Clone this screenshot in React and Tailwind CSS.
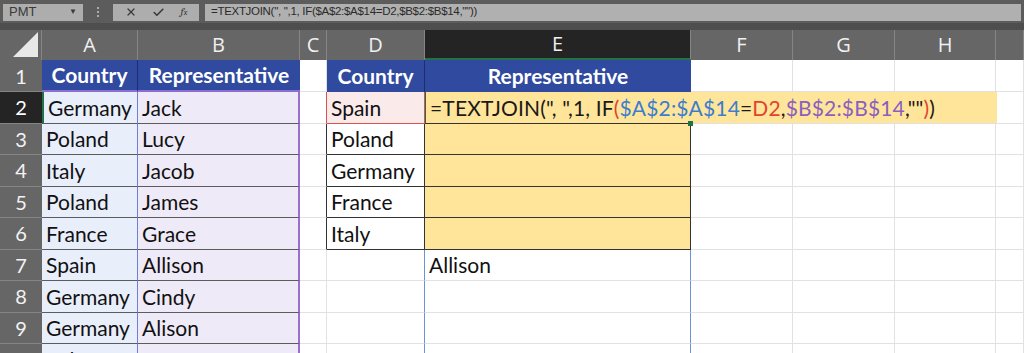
import { X, Check } from 'lucide-react'

const font = { fontFamily: 'Lato, "Noto Sans", sans-serif' }

const widths = {
    A: 'w-[96px]',
    B: 'w-[162px]',
    C: 'w-[27px]',
    D: 'w-[98px]',
    E: 'w-[266px]',
    F: 'w-[102px]',
    G: 'w-[102px]',
    H: 'w-[101px]',
    I: 'flex-1',
}

const listA = ['Germany', 'Poland', 'Italy', 'Poland', 'France', 'Spain', 'Germany', 'Germany', 'Italy']
const listB = ['Jack', 'Lucy', 'Jacob', 'James', 'Grace', 'Allison', 'Cindy', 'Alison', 'Peter']
const listD = ['Spain', 'Poland', 'Germany', 'France', 'Italy']

function Cell({ col, className = '', children }) {
    return (
        <div className={`${widths[col]} shrink-0 h-full flex items-center px-[4px] whitespace-nowrap relative ${className}`}>
            {children}
        </div>
    )
}

function RowHead({ n, active }) {
    return (
        <div className={`w-[42px] shrink-0 h-full flex items-center justify-center text-[20px] border-b border-[#858585] ${active ? 'bg-[#242424] text-white' : 'bg-[#666666] text-[#f2f2f2]'}`}>
            {n}
        </div>
    )
}

function Formula() {
    return (
        <span className="text-[#1a1a1a] tracking-[0.15px]">
            =TEXTJOIN(", ",1, IF<span className="text-[#e0442f]">(</span>
            <span className="text-[#3b7dd0]">$A$2:$A$14</span>=
            <span className="text-[#e0442f]">D2</span>,
            <span className="text-[#8a5fc0]">$B$2:$B$14</span>,""
            <span className="text-[#e0442f]">)</span>)
        </span>
    )
}

const grid = 'border-r border-b border-[#e1e1e1]'

export default function App() {
    const rows = []
    for (let i = 0; i < 9; i++) {
        const r = i + 2
        const inTable2 = r <= 6
        rows.push(
            <div key={r} className="flex h-[31.5px]">
                <RowHead n={r} active={r === 2} />
                <Cell col="A" className={`bg-[#e9eefb] border-b border-[#5c5c5c] border-r border-r-[#6f7fd6] ${r === 2 ? 'border-l-2 border-l-[#217346]' : ''}`}>
                    {listA[i]}
                </Cell>
                <Cell col="B" className="bg-[#efeaf8] border-b border-[#5c5c5c] border-r-2 border-r-[#9b6fd0]">
                    {listB[i]}
                </Cell>
                <Cell col="C" className={`${grid} ${inTable2 ? 'border-r-[#333]' : ''} ${r === 2 ? 'border-r-[#d9534f]' : ''}`} />
                {inTable2 ? (
                    <Cell col="D" className={r === 2 ? 'bg-[#fbeaea] border-b border-r border-[#d9534f]' : 'border-b border-r border-[#333]'}>
                        {listD[i]}
                    </Cell>
                ) : (
                    <Cell col="D" className={`${grid} border-r-[#6b93d6]`} />
                )}
                {inTable2 ? (
                    <Cell col="E" className="bg-[#ffe599] border-b border-r border-[#333]">
                        {r === 2 && (
                            <div className="absolute left-0 top-0 h-full w-[572px] bg-[#ffe599] flex items-center px-[4px] z-10 border-l border-[#217346]">
                                <Formula />
                            </div>
                        )}
                        {r === 2 && <div className="absolute right-[-3px] bottom-[-3px] w-[5px] h-[5px] bg-[#217346] z-20" />}
                    </Cell>
                ) : (
                    <Cell col="E" className={`${grid} border-r-[#6b93d6]`}>{r === 7 ? 'Allison' : ''}</Cell>
                )}
                <Cell col="F" className={grid} />
                <Cell col="G" className={grid} />
                <Cell col="H" className={grid} />
                <Cell col="I" className={grid} />
            </div>
        )
    }

    const colHeads = ['A', 'B', 'C', 'D', 'E', 'F', 'G', 'H', 'I']

    return (
        <div className="w-[1024px] h-[353px] overflow-hidden bg-white text-[21px] text-[#111]" style={font}>
            {/* barre de formule */}
            <div className="h-[23px] bg-[#5c5c5c] flex items-center gap-[6px] px-[3px] pt-[1px]" style={{ fontFamily: '"Liberation Sans", Arial, sans-serif' }}>
                <div className="w-[80px] h-[17px] bg-[#adadad] flex items-center justify-between px-[6px] text-[13px] text-[#3a3a3a]">
                    <span>PMT</span>
                    <span className="text-[8px]">▼</span>
                </div>
                <div className="w-[18px] flex flex-col items-center gap-[2px]">
                    <span className="w-[2px] h-[2px] bg-[#aaa]" />
                    <span className="w-[2px] h-[2px] bg-[#aaa]" />
                    <span className="w-[2px] h-[2px] bg-[#aaa]" />
                </div>
                <div className="w-[86px] h-[17px] bg-[#adadad] flex items-center justify-around px-[4px] text-[#3a3a3a]">
                    <X size={12} strokeWidth={2.5} />
                    <Check size={13} strokeWidth={3} />
                    <span className="italic text-[11px] font-serif">f<span className="text-[8px]">x</span></span>
                </div>
                <div className="flex-1 h-[17px] bg-[#b0b0b0] flex items-center px-[6px] text-[11.5px] text-[#2a2a2a] tracking-[-0.3px]">
                    =TEXTJOIN(", ",1, IF($A$2:$A$14=D2,$B$2:$B$14,""))
                </div>
            </div>
            <div className="h-[7px] bg-[#4e4e4e]" />

            {/* en-têtes de colonnes */}
            <div className="flex h-[30px] bg-[#666666] text-[#f0f0f0] text-[20px]" style={{ fontFamily: '"Open Sans", sans-serif' }}>
                <div className="w-[42px] shrink-0 h-full relative border-r border-[#858585]">
                    <div className="absolute right-[3px] bottom-[3px] w-0 h-0 border-l-[25px] border-l-transparent border-b-[25px] border-b-[#e8e8e8]" />
                </div>
                {colHeads.map((c) => (
                    <div
                        key={c}
                        className={`${widths[c]} shrink-0 h-full flex items-center justify-center border-r border-[#858585] ${c === 'E' ? 'bg-[#242424] border-b-2 border-b-[#217346]' : ''}`}
                    >
                        {c === 'I' ? '' : c}
                    </div>
                ))}
            </div>

            {/* ligne 1 */}
            <div className="flex h-[32px]">
                <RowHead n={1} />
                <Cell col="A" className="bg-[#2f4a9e] text-white font-bold justify-center border-r border-[#1d2f6e] border-b-2 border-b-[#8a6fd0]">Country</Cell>
                <Cell col="B" className="bg-[#2f4a9e] text-white font-bold justify-center border-b-2 border-b-[#8a6fd0]">Representative</Cell>
                <Cell col="C" className={grid} />
                <Cell col="D" className="bg-[#2f4a9e] text-white font-bold justify-center border-r border-[#1d2f6e]">Country</Cell>
                <Cell col="E" className="bg-[#2f4a9e] text-white font-bold justify-center">Representative</Cell>
                <Cell col="F" className={grid} />
                <Cell col="G" className={grid} />
                <Cell col="H" className={grid} />
                <Cell col="I" className={grid} />
            </div>

            {rows}
        </div>
    )
}
